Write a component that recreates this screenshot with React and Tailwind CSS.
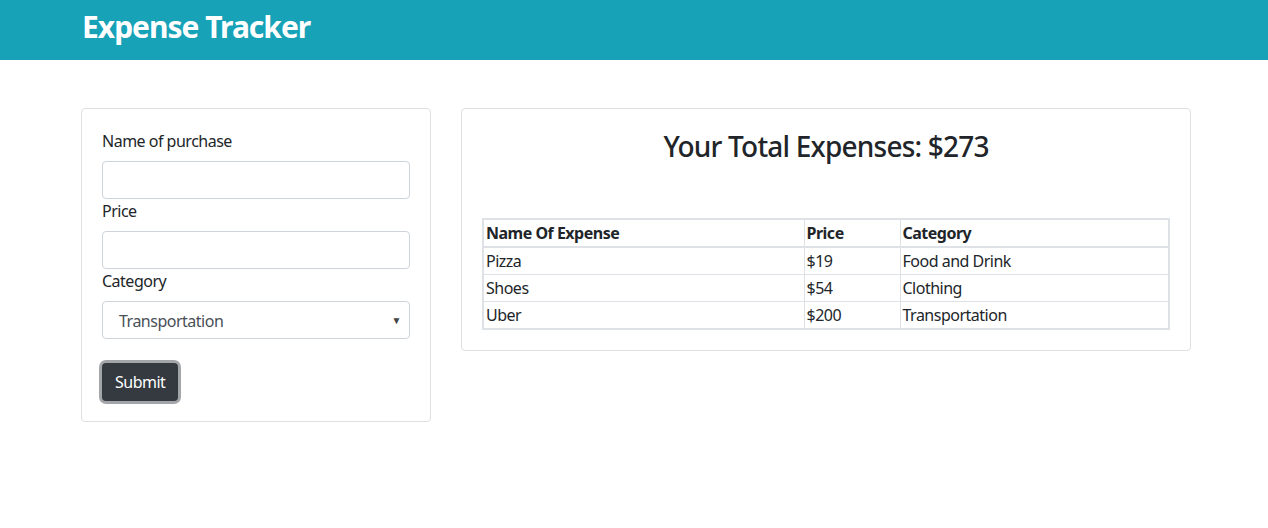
// Expense Tracker — form on the left, total + expense table on the right

const expenses = [
  { name: "Pizza", price: 19, category: "Food and Drink" },
  { name: "Shoes", price: 54, category: "Clothing" },
  { name: "Uber", price: 200, category: "Transportation" },
]

function Field({ label, children }) {
  return (
    <div className="flex flex-col">
      <label className="leading-6 mb-2">{label}</label>
      {children}
    </div>
  )
}

function ExpenseForm() {
  return (
    <div className="w-[350px] shrink-0 border border-[#dfdfdf] rounded p-5 bg-white">
      <Field label="Name of purchase">
        <input className="h-[38px] w-full border border-[#ced4da] rounded px-3 outline-none" />
      </Field>
      <Field label="Price">
        <input className="h-[38px] w-full border border-[#ced4da] rounded px-3 outline-none" />
      </Field>
      <Field label="Category">
        <div className="h-[38px] w-full border border-[#ced4da] rounded pl-4 pr-2 flex items-center justify-between text-[#495057]">
          <span className="pt-px">Transportation</span>
          <span className="text-[10px] text-[#444]">▼</span>
        </div>
      </Field>
      <button className="mt-6 h-[38px] px-[13px] rounded bg-[#343a40] text-white ring-[3px] ring-[#a3a6a9]">
        Submit
      </button>
    </div>
  )
}

function ExpenseTable() {
  const total = expenses.reduce((s, e) => s + e.price, 0)
  return (
    <div className="flex-1 border border-[#dfdfdf] rounded p-5 bg-white">
      <h3 className="text-[28px] leading-[34px] font-medium text-center tracking-[-0.8px]">Your Total Expenses: ${total}</h3>
      <table className="mt-[55px] w-full border-collapse border-2 border-[#dee2e6] text-left">
        <thead>
          <tr>
            <th className="w-[321px] border border-b-2 border-[#dee2e6] px-[2px] py-0 leading-[26px] font-bold">Name Of Expense</th>
            <th className="w-[96px] border border-b-2 border-[#dee2e6] px-[2px] py-0 leading-[26px] font-bold">Price</th>
            <th className="border border-b-2 border-[#dee2e6] px-[2px] py-0 leading-[26px] font-bold">Category</th>
          </tr>
        </thead>
        <tbody>
          {expenses.map(e => (
            <tr key={e.name}>
              <td className="border border-[#dee2e6] px-[2px] leading-[26px]">{e.name}</td>
              <td className="border border-[#dee2e6] px-[2px] leading-[26px]">${e.price}</td>
              <td className="border border-[#dee2e6] px-[2px] leading-[26px]">{e.category}</td>
            </tr>
          ))}
        </tbody>
      </table>
    </div>
  )
}

export default function App() {
  return (
    <div className="min-h-[528px] bg-white text-[#212529] text-base tracking-[-0.5px]" style={{ fontFamily: '"Noto Sans", "Open Sans", sans-serif' }}>
      <header className="h-[60px] bg-[#17a2b8]">
        <div className="w-[1110px] ml-[82px]">
          <h1 className="text-[30px] leading-[54px] font-bold text-white tracking-[-1px]">Expense Tracker</h1>
        </div>
      </header>
      <main className="w-[1110px] ml-[81px] mt-12 flex items-start gap-[30px]">
        <ExpenseForm />
        <ExpenseTable />
      </main>
    </div>
  )
}
